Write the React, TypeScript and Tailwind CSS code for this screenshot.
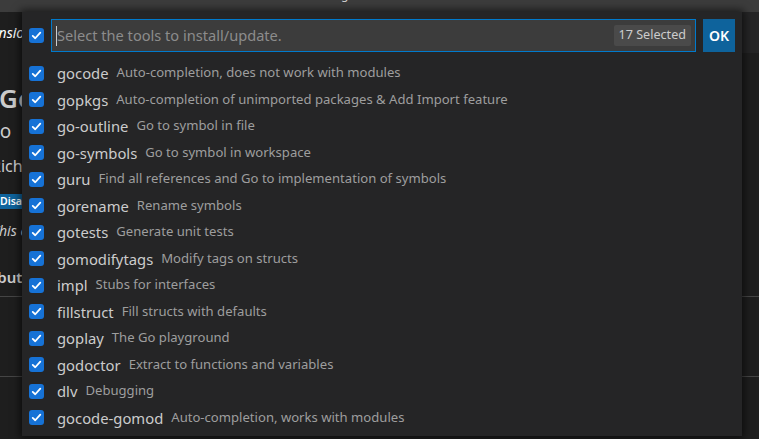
import React from "react";

const tools: [string, string][] = [
  ["gocode", "Auto-completion, does not work with modules"],
  ["gopkgs", "Auto-completion of unimported packages & Add Import feature"],
  ["go-outline", "Go to symbol in file"],
  ["go-symbols", "Go to symbol in workspace"],
  ["guru", "Find all references and Go to implementation of symbols"],
  ["gorename", "Rename symbols"],
  ["gotests", "Generate unit tests"],
  ["gomodifytags", "Modify tags on structs"],
  ["impl", "Stubs for interfaces"],
  ["fillstruct", "Fill structs with defaults"],
  ["goplay", "The Go playground"],
  ["godoctor", "Extract to functions and variables"],
  ["dlv", "Debugging"],
  ["gocode-gomod", "Auto-completion, works with modules"],
];

function Check() {
  return (
    <div className="w-[15px] h-[15px] shrink-0 rounded-[3px] bg-[#1672d6] flex items-center justify-center">
      <svg width="11" height="11" viewBox="0 0 16 16" fill="none">
        <path d="M2.5 8.5 L6.2 12 L13.5 3.8" stroke="#ffffff" strokeWidth="2.6" strokeLinecap="round" strokeLinejoin="round" />
      </svg>
    </div>
  );
}

export default function App() {
  const font = { fontFamily: '"Noto Sans", "Open Sans", sans-serif' };
  return (
    <div className="relative w-[759px] h-[439px] overflow-hidden bg-[#1e1e1e]" style={font}>
      {/* background window */}
      <div className="flex flex-col w-full h-full">
        <div className="h-[12px] bg-[#3c3c3c] overflow-hidden shrink-0">
          <span className="block ml-[341px] mt-[-12px] text-[12px] leading-[14px] text-[#cccccc]">g</span>
        </div>
        <div className="h-[41px] flex shrink-0">
          <div className="w-[140px] bg-[#1e1e1e] flex items-center overflow-hidden">
            <span className="ml-[-27px] whitespace-nowrap italic text-[14px] text-[#ffffff]">Extension: Go</span>
          </div>
          <div className="flex-1 bg-[#252526]" />
        </div>
        <div className="flex-1 flex flex-col bg-[#1e1e1e] text-[#cccccc]">
          <div className="h-[30px]" />
          <div className="h-[30px] flex items-center">
            <span className="ml-[-1px] whitespace-nowrap text-[26px] font-semibold leading-none">Go</span>
          </div>
          <div className="h-[36px] flex items-center">
            <span className="ml-[-14px] whitespace-nowrap text-[19px] leading-none">Go</span>
          </div>
          <div className="h-[34px] flex items-center">
            <span className="ml-[-9px] whitespace-nowrap text-[16px] leading-none">Rich Go language support for Visual Studio Code</span>
          </div>
          <div className="h-[36px] flex items-center">
            <span className="ml-[-2px] whitespace-nowrap text-[10.5px] leading-[15px] px-[2px] bg-[#0e639c] text-white font-semibold">Disable</span>
          </div>
          <div className="h-[24px] flex items-center">
            <span className="ml-[-8px] whitespace-nowrap italic text-[14px] leading-none">This extension is enabled globally.</span>
          </div>
          <div className="h-[50px] flex items-end pb-[8px]">
            <span className="ml-[-48px] whitespace-nowrap text-[15px] font-semibold leading-none">Contributions</span>
          </div>
          <div className="h-[4px] border-b border-[#454545]" />
          <div className="h-[80px] border-b border-[#454545]" />
          <div className="flex-1" />
        </div>
      </div>

      {/* quick pick overlay */}
      <div className="absolute left-[22px] top-[12px] w-[720px] h-[424px] bg-[#252526] shadow-[0_0_8px_2px_rgba(0,0,0,0.6)] px-[7px] pt-[7px] flex flex-col">
        <div className="flex items-center h-[33px]">
          <Check />
          <div className="ml-[7px] w-[645px] h-[33px] border border-[#007acc] bg-[#3c3c3c] flex items-center pl-[4px] pr-[4px]">
            <div className="w-[1px] h-[20px] bg-[#cccccc]" />
            <span className="text-[14.6px] text-[#8c8c8c] whitespace-nowrap">Select the tools to install/update.</span>
            <div className="flex-1" />
            <span className="h-[21px] px-[5px] flex items-center rounded-[2px] bg-[#4a4a4a] text-[12.6px] text-[#cccccc] whitespace-nowrap">17 Selected</span>
          </div>
          <div className="ml-[7px] w-[32px] h-[33px] bg-[#0e639c] flex items-center justify-center text-[14px] font-semibold text-white">OK</div>
        </div>
        <div className="mt-[8px] flex flex-col">
          {tools.map(([name, desc]) => (
            <div key={name} className="h-[26.5px] flex items-center">
              <Check />
              <span className="ml-[13px] text-[14.8px] text-[#cccccc] whitespace-nowrap">{name}</span>
              <span className="ml-[8px] text-[13.1px] text-[#9e9e9e] whitespace-nowrap">{desc}</span>
            </div>
          ))}
        </div>
      </div>
    </div>
  );
}
